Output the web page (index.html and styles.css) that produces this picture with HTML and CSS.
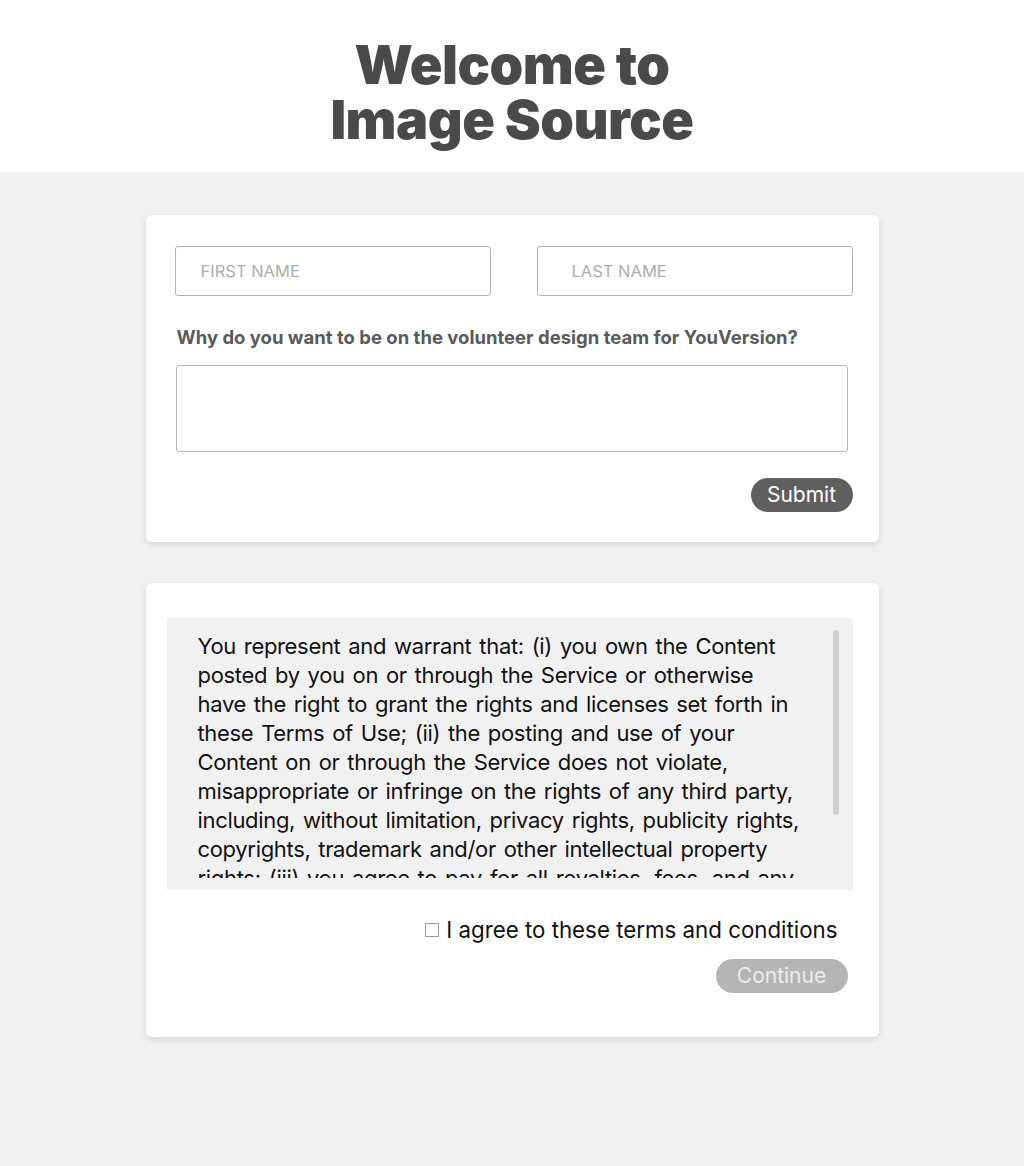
FILE: index.html
```html
<!DOCTYPE html>
<html lang="en">
<head>
<meta charset="utf-8">
<title>Welcome to Image Source</title>
<link rel="stylesheet" href="styles.css">
</head>
<body>
<header class="hero">
  <h1 class="hero-title">Welcome to<br>Image Source</h1>
</header>
<main class="page">
  <form class="card card-form">
    <div class="name-row">
      <input class="field field-first" type="text" placeholder="FIRST NAME">
      <input class="field field-last" type="text" placeholder="LAST NAME">
    </div>
    <label class="question" for="why">Why do you want to be on the volunteer design team for YouVersion?</label>
    <textarea id="why" class="answer"></textarea>
    <div class="actions">
      <button type="button" class="btn btn-dark">Submit</button>
    </div>
  </form>

  <section class="card card-terms">
    <div class="terms-box">
      <div class="terms-scroll">
        <p class="terms-text">You represent and warrant that: (i) you own the Content posted by you on or through the Service or otherwise have the right to grant the rights and licenses set forth in these Terms of Use; (ii) the posting and use of your Content on or through the Service does not violate, misappropriate or infringe on the rights of any third party, including, without limitation, privacy rights, publicity rights, copyrights, trademark and/or other intellectual property rights; (iii) you agree to pay for all royalties, fees, and any other monies owed by reason of Content you post on or through the Service.</p>
      </div>
      <div class="scroll-thumb"></div>
    </div>
    <label class="agree"><span class="checkbox"></span>I agree to these terms and conditions</label>
    <div class="actions actions-terms">
      <button type="button" class="btn btn-muted">Continue</button>
    </div>
  </section>
</main>
</body>
</html>
```

FILE: styles.css
```css
* { box-sizing: border-box; }
html, body { margin: 0; padding: 0; }
body {
  font-family: "Inter", "Liberation Sans", sans-serif;
  background: #f1f1f1;
  min-height: 1166px;
}
.hero {
  background: #fff;
  height: 172px;
  padding-top: 37px;
  text-align: center;
}
.hero-title {
  margin: 0;
  font-family: "Inter", sans-serif;
  font-weight: 900;
  font-size: 54px;
  line-height: 55px;
  color: #4a4a4a;
  letter-spacing: -0.5px;
}
.page {
  width: 733px;
  margin: 0 auto;
  padding-top: 43px;
  display: flex;
  flex-direction: column;
  gap: 41px;
}
.card {
  background: #fff;
  border-radius: 6px;
  box-shadow: 0 2px 6px rgba(0,0,0,0.13);
}
.card-form {
  height: 327px;
  padding: 31px 26px 0 29px;
  display: flex;
  flex-direction: column;
}
.name-row {
  display: flex;
  justify-content: space-between;
}
.field {
  width: 316px;
  height: 50px;
  border: 1px solid #b3b3b3;
  border-radius: 3px;
  font-family: "Inter", sans-serif;
  font-size: 16.5px;
  color: #333;
  outline: none;
  background: #fff;
}
.field-first { padding: 0 0 0 25px; }
.field-last { padding: 0 0 0 34px; }
.field::placeholder { color: #adadad; }
.question {
  margin-top: 30px;
  padding-left: 2px;
  font-size: 18.5px;
  font-weight: 700;
  color: #5a5a5a;
  line-height: 22px;
}
.answer {
  margin-top: 17px;
  margin-left: 1px;
  width: 672px;
  height: 87px;
  border: 1px solid #b3b3b3;
  border-radius: 3px;
  resize: none;
  outline: none;
}
.actions {
  display: flex;
  justify-content: flex-end;
  margin-top: 26px;
}
.btn {
  border: none;
  border-radius: 17px;
  height: 34px;
  font-family: "Inter", sans-serif;
  font-size: 21px;
  padding: 0;
  line-height: 34px;
  text-align: center;
}
.btn-dark {
  background: #5f5f5f;
  color: #fff;
  width: 102px;
}
.btn-muted {
  background: #b5b5b5;
  color: #ececec;
  width: 132px;
}
.card-terms {
  height: 454px;
  padding: 35px 26px 0 21px;
  display: flex;
  flex-direction: column;
}
.terms-box {
  position: relative;
  background: #f1f1f1;
  height: 272px;
  padding: 12px 0;
}
.terms-scroll {
  height: 248px;
  overflow: hidden;
  padding: 2px 49px 0 31px;
}
.terms-text {
  margin: 0;
  font-size: 22px;
  line-height: 29px;
  color: #111;
  letter-spacing: -0.33px;
  word-spacing: 2px;
}
.scroll-thumb {
  position: absolute;
  top: 12px;
  right: 14px;
  width: 6px;
  height: 185px;
  border-radius: 3px;
  background: #cfcfcf;
}
.agree {
  display: flex;
  align-items: center;
  justify-content: flex-end;
  margin-top: 27px;
  padding-right: 15px;
  font-size: 22.3px;
  color: #111;
  line-height: 26px;
}
.checkbox {
  width: 14px;
  height: 14px;
  border: 1px solid #9a9a9a;
  background: #fff;
  margin-right: 7px;
}
.actions-terms {
  margin-top: 16px;
  padding-right: 5px;
}
```
